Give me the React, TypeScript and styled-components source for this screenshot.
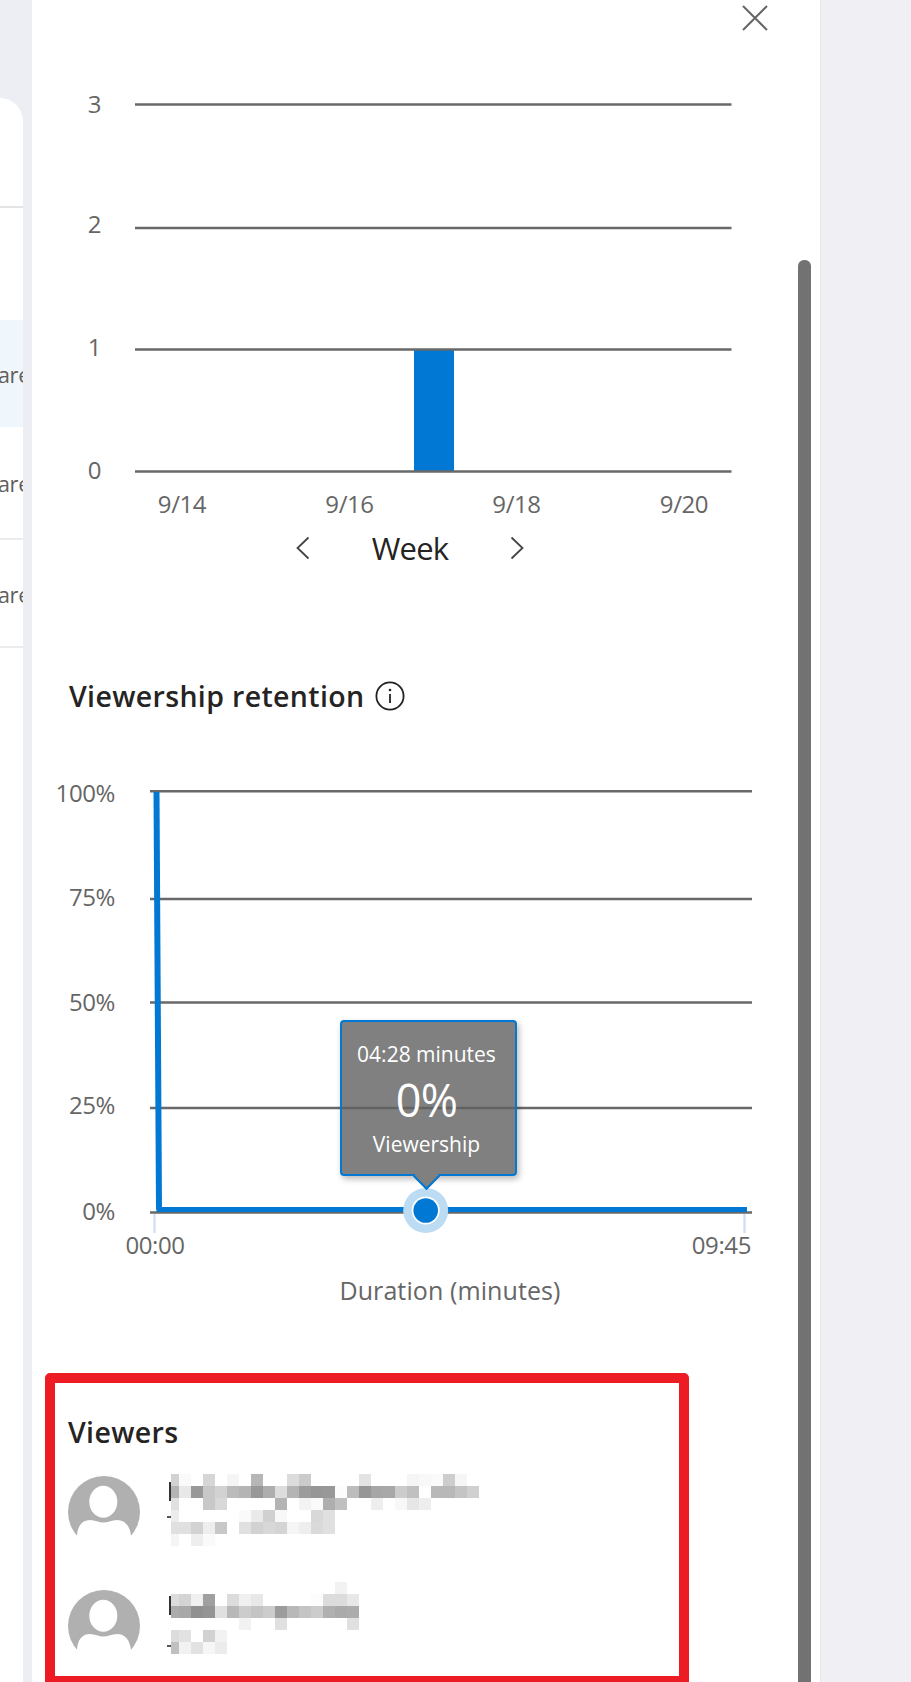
import React from "react";
import styled, { createGlobalStyle } from "styled-components";

const FONT = `"Open Sans", "Noto Sans", "Liberation Sans", sans-serif`;
const BLUE = "#0078d4";
const GRID = "#696969";

const Global = createGlobalStyle`
  html, body { margin: 0; padding: 0; background: #f0eff4; font-family: ${FONT}; }
`;

const Page = styled.div`
  display: flex;
  width: 911px;
  height: 1682px;
  overflow: hidden;
`;
const LeftRail = styled.aside`
  width: 32px;
  flex: none;
  background: #eceef3;
  padding-top: 98px;
  overflow: hidden;
  box-sizing: border-box;
`;
const ListCard = styled.div`
  width: 23px;
  height: 1584px;
  background: #fff;
  border-top-right-radius: 24px;
  overflow: hidden;
`;
const ListHead = styled.div`
  height: 108px;
  border-bottom: 2px solid #e4e4e4;
`;
const ListRow = styled.div<{ $active?: boolean; $h: number; $line?: boolean }>`
  height: ${(p) => p.$h}px;
  box-sizing: border-box;
  display: flex;
  align-items: center;
  padding-top: 1px;
  background: ${(p) => (p.$active ? "#eff6fc" : "#fff")};
  border-bottom: ${(p) => (p.$line ? "2px solid #ececec" : "none")};
  color: #605e5c;
  font-size: 22px;
  white-space: nowrap;
`;
const ListText = styled.span`
  margin-left: -27px;
  letter-spacing: -0.4px;
`;
const Panel = styled.main`
  width: 788px;
  flex: none;
  position: relative;
  background: #fff;
  border-right: 1px solid #e8e8e8;
  box-sizing: content-box;
  overflow: hidden;
`;
const CloseRow = styled.div`
  height: 60px;
  box-sizing: border-box;
  padding: 5px 52px 0 0;
  display: flex;
  justify-content: flex-end;
  align-items: flex-start;
`;
const RightRail = styled.div`
  flex: 1;
  background: #f0eff4;
`;
const Scrollbar = styled.div`
  position: absolute;
  left: 766px;
  top: 260px;
  bottom: 0;
  width: 13px;
  background: #727272;
  border-radius: 6px 6px 0 0;
`;
const Chart = styled.svg`
  display: block;
`;
const AxisLabel = styled.text`
  font-family: ${FONT};
  font-size: 24px;
  letter-spacing: -0.4px;
  fill: #666;
`;
const AxisTitle = styled.text`
  font-family: ${FONT};
  font-size: 25px;
  letter-spacing: 0.1px;
  fill: #666;
`;
const Pager = styled.div`
  height: 46px;
  display: flex;
  align-items: center;
  justify-content: center;
  gap: 62px;
  padding-right: 32px;
`;
const PagerLabel = styled.span`
  font-size: 31px;
  line-height: 46px;
  color: #252423;
  letter-spacing: -0.8px;
`;
const SectionTitle = styled.h2`
  margin: 106px 0 0 37px;
  height: 38px;
  display: flex;
  align-items: center;
  gap: 11px;
  font-size: 28.5px;
  line-height: 38px;
  font-weight: 600;
  color: #252423;
  letter-spacing: 0.35px;
`;
const RetentionArea = styled.div`
  position: relative;
  margin-top: 55px;
  width: 788px;
  height: 540px;
`;
const Tooltip = styled.div`
  position: absolute;
  left: 308px;
  top: 250px;
  width: 177px;
  height: 156px;
  box-sizing: border-box;
  padding-right: 4px;
  background: rgba(96, 96, 96, 0.8);
  border: 2px solid ${BLUE};
  border-radius: 4px;
  box-shadow: 2px 3px 6px rgba(0, 0, 0, 0.28);
  color: #fff;
  display: flex;
  flex-direction: column;
  align-items: center;
  text-align: center;
  &::after {
    content: "";
    position: absolute;
    left: 75px;
    bottom: -12px;
    width: 19px;
    height: 19px;
    background: #808080;
    border-right: 2px solid ${BLUE};
    border-bottom: 2px solid ${BLUE};
    transform: rotate(45deg);
    box-sizing: border-box;
  }
`;
const TipSmall = styled.div<{ $top: number }>`
  font-size: 21px;
  line-height: 28px;
  margin-top: ${(p) => p.$top}px;
  letter-spacing: 0;
`;
const TipBig = styled.div`
  font-size: 45px;
  line-height: 54px;
  margin-top: 5px;
  letter-spacing: -0.8px;
`;
const ViewersBox = styled.section`
  margin: 63px 0 0 13px;
  width: 644px;
  height: 313px;
  box-sizing: border-box;
  border: 10px solid #ed1c24;
  border-radius: 5px;
  padding: 30px 13px 0;
  background: #fff;
`;
const ViewersTitle = styled.h3`
  margin: 0 0 17px;
  font-size: 28.5px;
  line-height: 38px;
  font-weight: 600;
  color: #252423;
  letter-spacing: 0.35px;
`;
const ViewerRow = styled.div`
  display: flex;
  align-items: flex-start;
  gap: 27px;
  height: 114px;
`;
const Avatar = styled.svg`
  flex: none;
  margin-top: 8px;
`;
const Mosaic = styled.svg`
  flex: none;
`;

const AvatarIcon = () => (
  <Avatar width="72" height="72" viewBox="0 0 72 72">
    <circle cx="36" cy="36" r="36" fill="#b0b0b0" />
    <ellipse cx="35.3" cy="25.7" rx="14" ry="16" fill="#fff" />
    <path d="M9 60C9.5 50 14 44 22 44C27 44 31 46.6 35.5 46.6C40 46.6 44 44 49 44C57 44 62 50 63 60L72 60L72 72L0 72L0 60Z" fill="#fff" />
  </Avatar>
);

const MOSAIC_A = [
  "d2 fa ff d6 ff f5 ff b6 ff ff dc cb ff ff ff ff e3 ff ff ff f5 f8 fa cd f6",
  "b4 e8 98 c8 d2 bb b4 98 ae dd b4 9c 96 98 fc bc 96 a6 a8 cc c0 ff b8 b8 c4 d0",
  "e0 ff ff c8 d8 ff ff ff ff b4 ff f3 fa ae c0 ff ff ee ff f8 e6 ee",
  "ec ff ff ff ff ff fa ea d0 f8 ff ff d8 e0",
  "e0 e0 d2 ee c8 ff e0 d2 d8 d4 f5 ee da e0",
  "f5 ff ee fa",
];
const MOSAIC_B = [
  "ff ff ff ff ff ff ff ff ff ff ff ff ff ff f2",
  "dc d4 f0 a0 ff dc f0 e8 ff ff ff ff fc dc dc e8",
  "ac a8 90 94 e0 b8 cc c4 cc 9c b8 c4 cc b0 aa ac",
  "ff ff ff ff ff ff f2 ff ff e0 ff ff ff ff ff e0",
  "dc e2 ff d2 f2",
  "c0 f2 e2 f6 ec",
];

const BlurredText = ({ rows, top, dash }: { rows: string[]; top: number; dash: number }) => (
  <Mosaic width="320" height="84" viewBox="0 0 320 84">
    {rows.map((row, r) =>
      row.split(" ").map((v, c) =>
        v === "ff" ? null : (
          <rect
            key={`${r}-${c}`}
            x={c === 0 ? 4 : 12 * c}
            y={top + r * 12}
            width={c === 0 ? 8 : 12}
            height="12"
            fill={`#${v}${v}${v}`}
          />
        )
      )
    )}
    <rect x="2" y="14" width="2" height="19" fill="#333" />
    <rect x="0" y={dash} width="4" height="2" fill="#555" />
  </Mosaic>
);

export default function App() {
  const weekLines = [104.5, 228, 349.5, 471.4];
  const weekY = [
    { t: "3", y: 113 },
    { t: "2", y: 233 },
    { t: "1", y: 356 },
    { t: "0", y: 479 },
  ];
  const weekX = [
    { t: "9/14", x: 182 },
    { t: "9/16", x: 349.5 },
    { t: "9/18", x: 516.5 },
    { t: "9/20", x: 684 },
  ];
  const retY = [
    { t: "100%", l: 791.3, y: 802 },
    { t: "75%", l: 899, y: 905.5 },
    { t: "50%", l: 1002.6, y: 1011 },
    { t: "25%", l: 1108, y: 1114 },
    { t: "0%", l: 1212.5, y: 1220 },
  ];
  return (
    <Page>
      <Global />
      <LeftRail>
        <ListCard>
          <ListHead />
          <ListRow $h={112} />
          <ListRow $h={107} $active>
            <ListText>Share</ListText>
          </ListRow>
          <ListRow $h={113} $line>
            <ListText>Share</ListText>
          </ListRow>
          <ListRow $h={108} $line>
            <ListText>Share</ListText>
          </ListRow>
        </ListCard>
      </LeftRail>
      <Panel>
        <CloseRow>
          <svg width="26" height="26" viewBox="0 0 26 26">
            <path d="M1 1L25 25M25 1L1 25" stroke="#666" strokeWidth="2" fill="none" />
          </svg>
        </CloseRow>
        <Chart width="788" height="465" viewBox="32 60 788 465">
          <rect x="414" y="350" width="40" height="121" fill={BLUE} />
          {weekLines.map((y) => (
            <line key={y} x1="135" x2="731.5" y1={y} y2={y} stroke={GRID} strokeWidth="2.5" />
          ))}
          {weekY.map((l) => (
            <AxisLabel key={l.t} x="101" y={l.y} textAnchor="end">
              {l.t}
            </AxisLabel>
          ))}
          {weekX.map((l) => (
            <AxisLabel key={l.t} x={l.x} y="513" textAnchor="middle">
              {l.t}
            </AxisLabel>
          ))}
        </Chart>
        <Pager>
          <svg width="14" height="24" viewBox="0 0 14 24">
            <path d="M12.5 1.5L1.5 12L12.5 22.5" stroke="#444" strokeWidth="1.8" fill="none" />
          </svg>
          <PagerLabel>Week</PagerLabel>
          <svg width="14" height="24" viewBox="0 0 14 24">
            <path d="M1.5 1.5L12.5 12L1.5 22.5" stroke="#444" strokeWidth="1.8" fill="none" />
          </svg>
        </Pager>
        <SectionTitle>
          Viewership retention
          <svg width="30" height="30" viewBox="0 0 30 30">
            <circle cx="15" cy="15" r="13.6" stroke="#222" strokeWidth="1.8" fill="none" />
            <path d="M15 13V22" stroke="#222" strokeWidth="1.8" />
            <circle cx="15" cy="9" r="1.3" fill="#222" />
          </svg>
        </SectionTitle>
        <RetentionArea>
          <Chart width="788" height="540" viewBox="32 770 788 540">
            {retY.map((l) => (
              <line key={l.t} x1="150" x2="752" y1={l.l} y2={l.l} stroke={GRID} strokeWidth="2.5" />
            ))}
            <rect x="153.4" y="1214" width="2.2" height="19" fill="#cfdcf2" />
            <rect x="743.4" y="1214" width="2.2" height="19" fill="#cfdcf2" />
            <path d="M156.5 792L159 1209.5" stroke={BLUE} strokeWidth="6" fill="none" />
            <path d="M156.5 1209.5L747 1209.5" stroke={BLUE} strokeWidth="5" fill="none" />
            {retY.map((l) => (
              <AxisLabel key={l.t} x="115" y={l.y} textAnchor="end">
                {l.t}
              </AxisLabel>
            ))}
            <AxisLabel x="155" y="1254" textAnchor="middle">00:00</AxisLabel>
            <AxisLabel x="751" y="1254" textAnchor="end">09:45</AxisLabel>
            <AxisTitle x="450" y="1300" textAnchor="middle">Duration (minutes)</AxisTitle>
            <circle cx="425.7" cy="1210.5" r="22.5" fill="#bcdcf4" />
            <circle cx="425.7" cy="1210.5" r="14" fill="#fff" />
            <circle cx="425.7" cy="1210.5" r="12.3" fill={BLUE} />
          </Chart>
          <Tooltip>
            <TipSmall $top={18}>04:28 minutes</TipSmall>
            <TipBig>0%</TipBig>
            <TipSmall $top={3}>Viewership</TipSmall>
          </Tooltip>
        </RetentionArea>
        <ViewersBox>
          <ViewersTitle>Viewers</ViewersTitle>
          <ViewerRow>
            <AvatarIcon />
            <BlurredText rows={MOSAIC_A} top={6} dash={48} />
          </ViewerRow>
          <ViewerRow>
            <AvatarIcon />
            <BlurredText rows={MOSAIC_B} top={0} dash={63} />
          </ViewerRow>
        </ViewersBox>
        <Scrollbar />
      </Panel>
      <RightRail />
    </Page>
  );
}
